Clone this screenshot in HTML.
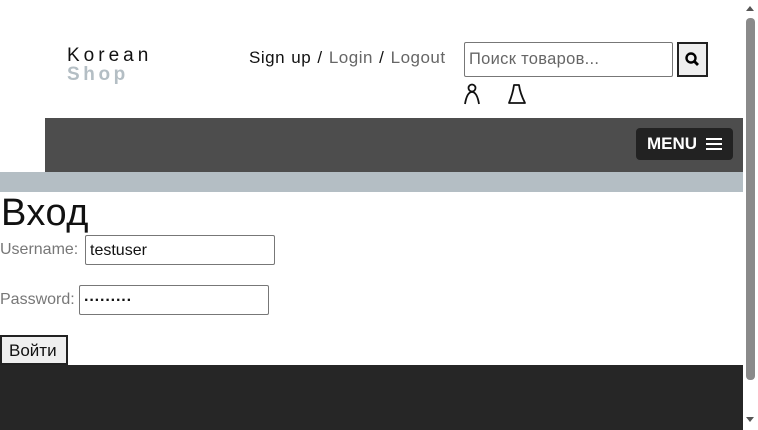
<!DOCTYPE html>
<html><head><meta charset="utf-8"><style>
*{margin:0;padding:0;box-sizing:border-box}
body{width:758px;height:430px;overflow:hidden;background:#fff;font-family:"Liberation Sans",sans-serif;position:relative}
.a{position:absolute}
</style></head><body>
<div class="a" style="left:67px;top:45px;font-size:19px;letter-spacing:4px;color:#111">Korean</div>
<div class="a" style="left:67px;top:64px;font-size:19px;letter-spacing:3.6px;color:#b4bec4;font-weight:bold">Shop</div>
<div class="a" style="left:249px;top:48px;font-size:17px;letter-spacing:0.5px;word-spacing:1px;color:#111;white-space:nowrap">Sign up / <span style="color:#666">Login</span> / <span style="color:#666">Logout</span></div>
<div class="a" style="left:464px;top:42px;width:209px;height:35px;border:1px solid #777;border-radius:2px;font-size:16.5px;letter-spacing:0.3px;color:#666;padding:7px 4px">Поиск товаров...</div>
<div class="a" style="left:677px;top:42px;width:31px;height:35px;border:2px solid #222;background:#efefef">
<svg width="27" height="31" viewBox="0 0 27 31"><circle cx="12" cy="14" r="4.5" fill="none" stroke="#000" stroke-width="2.4"/><line x1="15" y1="17" x2="19" y2="21" stroke="#000" stroke-width="2.8"/></svg></div>
<svg class="a" style="left:462px;top:83px" width="20" height="22"><circle cx="10" cy="5" r="3.5" fill="none" stroke="#111" stroke-width="1.8"/><path d="M3 21 Q5 9 10 9 Q15 9 17 21" fill="none" stroke="#111" stroke-width="1.8"/></svg>
<svg class="a" style="left:506px;top:83px" width="22" height="22"><path d="M8 2 L13 2 Q14 10 19 20 L3 20 Q7 10 8 2 Z" fill="none" stroke="#111" stroke-width="1.8" stroke-linejoin="round"/></svg>
<div class="a" style="left:45px;top:118px;width:698px;height:54px;background:#4d4d4d"></div>
<div class="a" style="left:636px;top:128px;width:97px;height:32px;background:#222;border-radius:4px;color:#fff;font-weight:bold;font-size:17px;padding:6px 11px">MENU
<span class="a" style="left:70px;top:10px;width:16px;height:2px;background:#fff;box-shadow:0 5px #fff,0 10px #fff"></span></div>
<div class="a" style="left:0;top:172px;width:743px;height:20px;background:#b4bec4"></div>
<div class="a" style="left:1px;top:192px;font-size:38px;letter-spacing:0.5px;color:#111">Вход</div>
<div class="a" style="left:0;top:241px;font-size:16px;color:#777">Username:</div>
<div class="a" style="left:85px;top:235px;width:190px;height:30px;border:1px solid #777;border-radius:2px;font-size:16px;padding:6px 4px;color:#111">testuser</div>
<div class="a" style="left:0;top:291px;font-size:16px;color:#777">Password:</div>
<div class="a" style="left:79px;top:285px;width:190px;height:30px;border:1px solid #777;border-radius:2px;font-size:16px;padding:8px 4px;color:#111;font-weight:bold;line-height:14px">·········</div>
<div class="a" style="left:0;top:335px;width:68px;height:30px;border:2px solid #222;background:#efefef;font-size:17px;padding:4px 7px;color:#111">Войти</div>
<div class="a" style="left:0;top:365px;width:743px;height:65px;background:#262626"></div>
<div class="a" style="left:743px;top:0;width:15px;height:430px;background:#fff"></div>
<div class="a" style="left:746px;top:18px;width:9px;height:362px;background:#8a8a8a;border-radius:4px"></div>
<div class="a" style="left:746px;top:6px;width:0;height:0;border:4px solid transparent;border-bottom:5px solid #555;border-top:0"></div>
<div class="a" style="left:746px;top:417px;width:0;height:0;border:4px solid transparent;border-top:5px solid #555;border-bottom:0"></div>
</body></html>
